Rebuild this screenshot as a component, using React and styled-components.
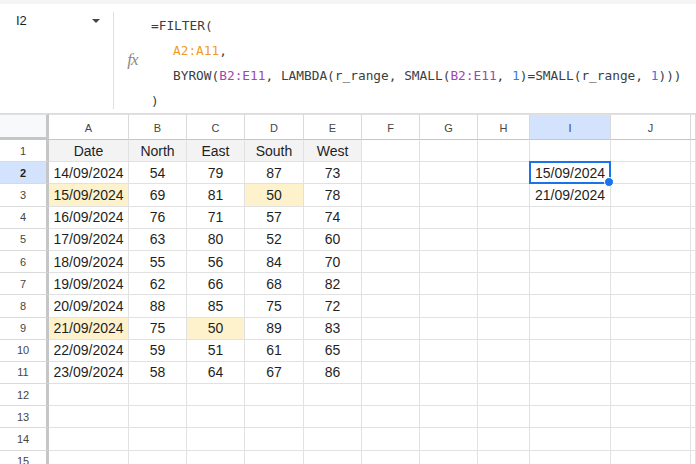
import React from "react";
import styled, { createGlobalStyle, css } from "styled-components";

const GlobalStyle = createGlobalStyle`
  html, body { margin: 0; padding: 0; background: #fff; }
  body { font-family: "Liberation Sans", Arial, sans-serif; overflow: hidden; }
  * { box-sizing: border-box; }
`;

const Page = styled.div`
  width: 696px;
  height: 464px;
  overflow: hidden;
  display: flex;
  flex-direction: column;
  background: #fff;
`;

const TopStrip = styled.div`
  height: 4px;
  background: #f3f5f7;
  flex: none;
`;

const FormulaBar = styled.div`
  height: 110px;
  flex: none;
  display: flex;
  border-bottom: 1px solid #dadce0;
  background: #fff;
`;

const NameBox = styled.div`
  width: 113px;
  flex: none;
  display: flex;
  align-items: flex-start;
  justify-content: space-between;
  padding: 10px 13px 0 16px;
  font-size: 13px;
  color: #1f1f1f;
  line-height: 14px;
`;

const Caret = styled.span`
  width: 0;
  height: 0;
  margin-top: 5px;
  border-left: 4px solid transparent;
  border-right: 4px solid transparent;
  border-top: 4px solid #444746;
`;

const Divider = styled.div`
  width: 1px;
  flex: none;
  background: #e0e0e0;
  margin: 8px 0 4px;
`;

const FxArea = styled.div`
  width: 37px;
  flex: none;
  display: flex;
  align-items: center;
  justify-content: center;
  padding-top: 3px;
  font-family: "Liberation Serif", "Times New Roman", serif;
  font-style: italic;
  font-size: 17px;
  color: #8a8a8a;
  letter-spacing: -1px;
`;

const Formula = styled.div`
  padding-top: 9px;
  font-family: "DejaVu Sans Mono", "Liberation Mono", monospace;
  font-size: 12.8px;
  line-height: 25px;
  color: #3c4043;
  white-space: pre;
`;

const FLine = styled.div`
  padding-left: ${(p) => (p.$indent ? "22px" : "0")};
`;

const Orange = styled.span` color: #f29c1f; `;
const Purple = styled.span` color: #a046b4; `;
const Blue = styled.span` color: #3b78e7; `;

const Grid = styled.div`
  display: grid;
  grid-template-columns: 49px 80px 58px 58px 59px 58px 58px 58px 52px 81px 80px 1fr;
  grid-template-rows: 26px repeat(15, 22.2px);
`;

const Cell = styled.div`
  position: relative;
  display: flex;
  align-items: center;
  justify-content: center;
  border-right: 1px solid #e1e1e1;
  border-bottom: 1px solid #e1e1e1;
  font-size: 14px;
  color: #1f1f1f;
  background: ${(p) => p.$bg || "#fff"};
  white-space: nowrap;
  overflow: visible;
`;

const ColHead = styled(Cell)`
  font-size: 11px;
  color: #444746;
  background: ${(p) => (p.$active ? "#d3e3fd" : "#fff")};
  border-top: 1px solid #e1e1e1;
  border-right-color: #dadada;
  border-bottom: 1px solid #c4c7c5;
  padding-top: 1px;
`;

const Corner = styled.div`
  background: #f8f9fa;
  border-top: 1px solid #e1e1e1;
  border-right: 3px solid #c4c7c5;
  border-bottom: 3px solid #c4c7c5;
`;

const RowHead = styled(Cell)`
  font-size: 11px;
  color: #444746;
  border-right: 3px solid #c4c7c5;
  border-bottom-color: #dadada;
  background: ${(p) => (p.$active ? "#d3e3fd" : "#fff")};
  ${(p) =>
    p.$active &&
    css`
      font-weight: bold;
      color: #1f1f1f;
    `}
`;

const Selection = styled.div`
  position: absolute;
  left: -1px;
  top: -1px;
  right: -1px;
  bottom: -1px;
  border: 2px solid #1a73e8;
  pointer-events: none;
`;

const Handle = styled.div`
  position: absolute;
  right: -5px;
  bottom: -5px;
  width: 8px;
  height: 8px;
  border-radius: 50%;
  background: #1a73e8;
  border: 1px solid #fff;
  box-sizing: content-box;
  z-index: 2;
`;

const cols = ["A", "B", "C", "D", "E", "F", "G", "H", "I", "J", ""];

const data = [
  ["Date", "North", "East", "South", "West"],
  ["14/09/2024", "54", "79", "87", "73"],
  ["15/09/2024", "69", "81", "50", "78"],
  ["16/09/2024", "76", "71", "57", "74"],
  ["17/09/2024", "63", "80", "52", "60"],
  ["18/09/2024", "55", "56", "84", "70"],
  ["19/09/2024", "62", "66", "68", "82"],
  ["20/09/2024", "88", "85", "75", "72"],
  ["21/09/2024", "75", "50", "89", "83"],
  ["22/09/2024", "59", "51", "61", "65"],
  ["23/09/2024", "58", "64", "67", "86"],
];

const highlights = { "3-0": true, "3-3": true, "9-0": true, "9-2": true };
const resultCol = { 2: "15/09/2024", 3: "21/09/2024" };

export default function App() {
  const rows = [];
  for (let r = 1; r <= 15; r++) {
    const cells = [
      <RowHead key={`h${r}`} $active={r === 2}>
        {r}
      </RowHead>,
    ];
    for (let c = 0; c < cols.length; c++) {
      let text = "";
      let bg;
      if (r <= 11 && c < 5) text = data[r - 1][c];
      if (r === 1 && c < 5) bg = "#f3f3f3";
      if (highlights[`${r}-${c}`]) bg = "#fef2cd";
      if (c === 8 && resultCol[r]) text = resultCol[r];
      const selected = c === 8 && r === 2;
      cells.push(
        <Cell key={`${r}-${c}`} $bg={bg}>
          {text}
          {selected && (
            <Selection>
              <Handle />
            </Selection>
          )}
        </Cell>
      );
    }
    rows.push(cells);
  }

  return (
    <Page>
      <GlobalStyle />
      <TopStrip />
      <FormulaBar>
        <NameBox>
          <span>I2</span>
          <Caret />
        </NameBox>
        <Divider />
        <FxArea>fx</FxArea>
        <Formula>
          <FLine>=FILTER(</FLine>
          <FLine $indent>
            <Orange>A2:A11</Orange>,
          </FLine>
          <FLine $indent>
            BYROW(<Purple>B2:E11</Purple>, LAMBDA(r_range, SMALL(
            <Purple>B2:E11</Purple>, <Blue>1</Blue>)=SMALL(r_range, <Blue>1</Blue>)))
          </FLine>
          <FLine>)</FLine>
        </Formula>
      </FormulaBar>
      <Grid>
        <Corner />
        {cols.map((c, i) => (
          <ColHead key={`c${i}`} $active={c === "I"}>
            {c}
          </ColHead>
        ))}
        {rows}
      </Grid>
    </Page>
  );
}
